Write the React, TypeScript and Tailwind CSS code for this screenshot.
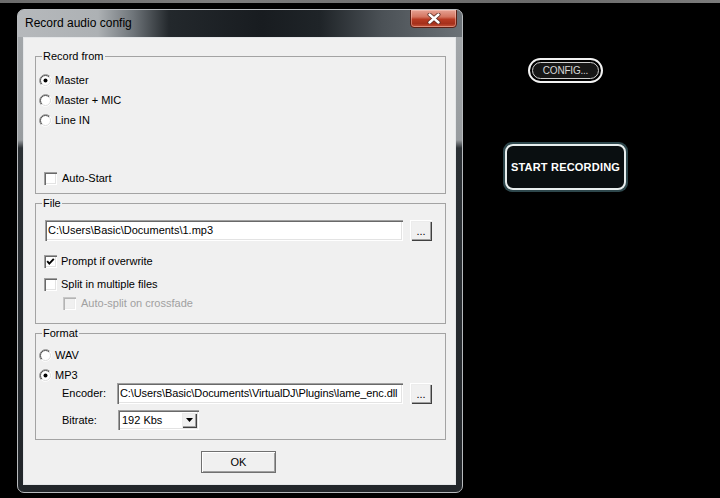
import React from "react";

function Radio({ checked }: { checked?: boolean }) {
  return (
    <svg width="13" height="13" viewBox="0 0 13 13" className="shrink-0">
      <circle cx="6.5" cy="6.5" r="5.5" fill="#ffffff" />
      <path d="M2.26 10.74 A6 6 0 0 1 10.74 2.26" fill="none" stroke="#8a8a8a" strokeWidth="1" />
      <path d="M2.96 10.04 A5 5 0 0 1 10.04 2.96" fill="none" stroke="#505050" strokeWidth="1" />
      <path d="M10.74 2.26 A6 6 0 0 1 2.26 10.74" fill="none" stroke="#ffffff" strokeWidth="1" />
      <path d="M10.04 2.96 A5 5 0 0 1 2.96 10.04" fill="none" stroke="#dcdcdc" strokeWidth="1" />
      {checked && <circle cx="6.5" cy="6.5" r="2" fill="#000000" />}
    </svg>
  );
}

function Check({ checked, disabled }: { checked?: boolean; disabled?: boolean }) {
  return (
    <div
      className={
        disabled
          ? "w-[13px] h-[13px] shrink-0 bg-[#f0f0f0] shadow-[inset_1px_1px_0_#c8c8c8,inset_2px_2px_0_#b4b4b4,inset_-1px_-1px_0_#ffffff,inset_-2px_-2px_0_#ececec]"
          : "w-[13px] h-[13px] shrink-0 bg-white shadow-[inset_1px_1px_0_#a0a0a0,inset_2px_2px_0_#696969,inset_-1px_-1px_0_#ffffff,inset_-2px_-2px_0_#e3e3e3]"
      }
    >
      {checked && (
        <svg width="13" height="13" viewBox="0 0 13 13">
          <polyline points="3.2,6.2 5.3,8.6 9.8,3.8" fill="none" stroke="#000" strokeWidth="1.9" />
        </svg>
      )}
    </div>
  );
}

const sunken =
  "bg-white shadow-[inset_1px_1px_0_#a0a0a0,inset_2px_2px_0_#696969,inset_-1px_-1px_0_#ffffff,inset_-2px_-2px_0_#e3e3e3]";
const raised =
  "bg-[#f0f0f0] shadow-[inset_1px_1px_0_#ffffff,inset_2px_2px_0_#ececec,inset_-1px_-1px_0_#404040,inset_-2px_-2px_0_#a0a0a0]";

function Dots() {
  return (
    <div className={`w-[22px] h-[21px] shrink-0 flex items-end justify-center pb-[4px] text-[11px] leading-[11px] ${raised}`}>
      ...
    </div>
  );
}

export default function App() {
  return (
    <div className="relative w-[720px] h-[498px] bg-black overflow-hidden font-['Liberation_Sans',Arial,sans-serif] text-black">
      <div className="h-[3px] bg-[linear-gradient(to_right,#6c6c6c,#7d7d7d_30%,#707070_55%,#6a6a6a_75%,#7b7b7b)]" />

      {/* Dialog window */}
      <div className="absolute left-[17px] top-[9px] w-[446px] h-[484px] rounded-[7px] border border-[#b8bbbe] overflow-hidden bg-[linear-gradient(to_bottom,#a5a9ac_0px,#989c9f_130px,#2c3135_138px,#22262a_100%)]">
        <div className="relative h-[27px] bg-[linear-gradient(to_right,#b6b9bc_0%,#adb1b4_18%,#6e7479_26%,#23282c_34%,#181c20_55%,#1f2428_68%,#4b5156_82%,#6c7277_100%)]">
          <div className="absolute left-[7px] top-[6px] text-[12px] leading-[15px] text-black">
            Record audio config
          </div>
          <div className="absolute right-[5px] -top-px w-[47px] h-[19px] rounded-b-[4px] border border-[#5a1f14] bg-[linear-gradient(to_bottom,#e6a293_0%,#d47560_40%,#b83a22_55%,#a5301b_80%,#c8553a_100%)] shadow-[inset_0_0_0_1px_rgba(255,210,200,0.45)] flex items-center justify-center">
            <svg width="14" height="11" viewBox="0 0 14 11">
              <path d="M2.5 1.5 L11.5 9.5 M11.5 1.5 L2.5 9.5" stroke="#5a2a20" strokeWidth="4" strokeLinecap="round" />
              <path d="M2.5 1.5 L11.5 9.5 M11.5 1.5 L2.5 9.5" stroke="#ffffff" strokeWidth="2.4" strokeLinecap="round" />
            </svg>
          </div>
        </div>

        {/* Client area */}
        <div className="ml-[5px] w-[433px] h-[448px] border border-[#e4e6e8] bg-[#f0f0f0] pl-[11px] flex flex-col text-[11px] leading-[13px]">
          {/* Record from */}
          <div className="relative mt-[18px] w-[411px] h-[138px] border border-[#a3a3a3] flex flex-col">
            <div className="absolute left-[6px] -top-[7px] bg-[#f0f0f0] px-[1px]">Record from</div>
            <div className="mt-[17px] ml-[3px] flex items-center h-[13px]">
              <Radio checked />
              <span className="ml-[3px]">Master</span>
            </div>
            <div className="mt-[7px] ml-[3px] flex items-center h-[13px]">
              <Radio />
              <span className="ml-[3px]">Master + MIC</span>
            </div>
            <div className="mt-[7px] ml-[3px] flex items-center h-[13px]">
              <Radio />
              <span className="ml-[3px]">Line IN</span>
            </div>
            <div className="mt-[45px] ml-[8px] flex items-center h-[13px]">
              <Check />
              <span className="ml-[5px]">Auto-Start</span>
            </div>
          </div>

          {/* File */}
          <div className="relative mt-[9px] w-[411px] h-[121px] border border-[#a3a3a3] flex flex-col">
            <div className="absolute left-[6px] -top-[7px] bg-[#f0f0f0] px-[1px]">File</div>
            <div className="mt-[16px] ml-[9px] flex items-start">
              <div className={`w-[358px] h-[21px] flex items-center pl-[3px] ${sunken}`}>
                C:\Users\Basic\Documents\1.mp3
              </div>
              <div className="ml-[7px]">
                <Dots />
              </div>
            </div>
            <div className="mt-[14px] ml-[8px] flex items-center h-[13px]">
              <Check checked />
              <span className="ml-[4px]">Prompt if overwrite</span>
            </div>
            <div className="mt-[10px] ml-[8px] flex items-center h-[13px]">
              <Check />
              <span className="ml-[4px]">Split in multiple files</span>
            </div>
            <div className="mt-[6px] ml-[27px] flex items-center h-[13px]">
              <Check disabled />
              <span className="ml-[5px] text-[#a0a0a0]">Auto-split on crossfade</span>
            </div>
          </div>

          {/* Format */}
          <div className="relative mt-[9px] w-[411px] h-[107px] border border-[#a3a3a3] flex flex-col">
            <div className="absolute left-[6px] -top-[7px] bg-[#f0f0f0] px-[1px]">Format</div>
            <div className="mt-[15px] ml-[3px] flex items-center h-[13px]">
              <Radio />
              <span className="ml-[3px]">WAV</span>
            </div>
            <div className="mt-[7px] ml-[3px] flex items-center h-[13px]">
              <Radio checked />
              <span className="ml-[3px]">MP3</span>
            </div>
            <div className="mt-px ml-[26px] flex items-center">
              <span className="w-[55px]">Encoder:</span>
              <div className={`w-[286px] h-[21px] flex items-center pl-[3px] tracking-[-0.1px] overflow-hidden whitespace-nowrap ${sunken}`}>
                C:\Users\Basic\Documents\VirtualDJ\Plugins\lame_enc.dll
              </div>
              <div className="ml-[7px]">
                <Dots />
              </div>
            </div>
            <div className="mt-[6px] ml-[26px] flex items-center">
              <span className="w-[56px]">Bitrate:</span>
              <div className={`w-[81px] h-[20px] flex items-center justify-between pl-[4px] pr-[2px] ${sunken}`}>
                <span>192 Kbs</span>
                <div className={`w-[16px] h-[16px] flex items-center justify-center ${raised}`}>
                  <svg width="7" height="4" viewBox="0 0 7 4">
                    <path d="M0 0 H7 L3.5 4 Z" fill="#000" />
                  </svg>
                </div>
              </div>
            </div>
          </div>

          <div className="mt-[11px] ml-[166px] w-[75px] h-[22px] border border-[#707070] bg-[#f0f0f0] shadow-[inset_1px_1px_0_#ffffff,inset_-1px_-1px_0_#a0a0a0] flex items-center justify-center text-[11px]">
            OK
          </div>
        </div>
      </div>

      {/* App controls behind dialog */}
      <div className="absolute left-[528px] top-[58px] w-[75px] h-[25px] rounded-full border-2 border-[#f2f2f2] bg-black p-[2px]">
        <div className="w-full h-full rounded-full border border-[#cfcfcf] bg-[#161616] flex items-center justify-center text-[10px] leading-[10px] tracking-[-0.2px] text-[#d6d6d6]">
          CONFIG...
        </div>
      </div>

      <div className="absolute left-[503px] top-[142px] w-[125px] h-[50px] rounded-[9px] bg-[#2e474c] p-[2px]">
        <div className="w-full h-full rounded-[8px] border-2 border-[#e8eeee] bg-[#0a0f11] flex items-center justify-center text-[11px] font-bold tracking-[0.2px] text-white">
          START RECORDING
        </div>
      </div>
    </div>
  );
}
